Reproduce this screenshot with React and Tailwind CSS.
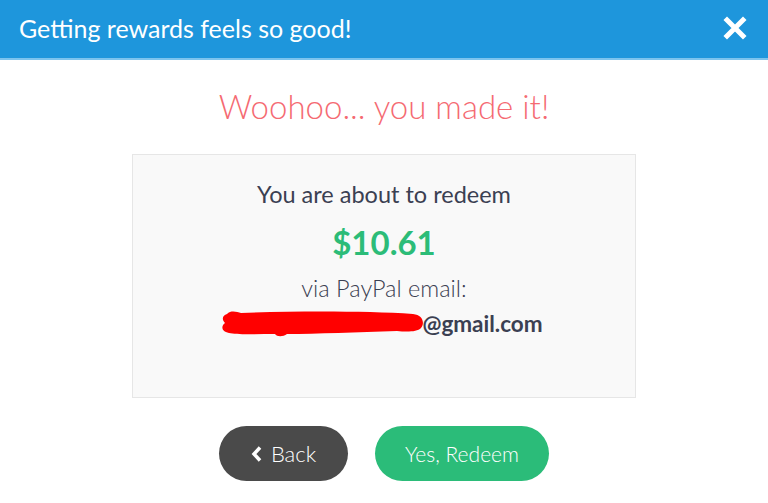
const App = () => {
    return (
        <div className="w-[768px] h-[503px] bg-white overflow-hidden" style={{ fontFamily: 'Lato, "Noto Sans", sans-serif' }}>
            <div className="h-[60px] bg-[#1e96dc] border-b-2 border-[#7cc4ee] flex items-center justify-between pl-[19px] pr-[21px]">
                <h1 className="text-white text-[25px] leading-none pb-[2px]">Getting rewards feels so good!</h1>
                <svg width="24" height="24" viewBox="0 0 24 24" className="mb-[2px]">
                    <path d="M4 4 L20 20 M20 4 L4 20" stroke="white" strokeWidth="5" strokeLinecap="square" />
                </svg>
            </div>

            <div className="flex flex-col items-center">
                <h2 className="mt-[30px] text-[33px] font-light text-[#f56a72] leading-none">Woohoo... you made it!</h2>

                <div className="mt-[31px] w-[504px] h-[244px] bg-[#f9f9f9] border border-[#e6e6e6] flex flex-col items-center text-[#3b4052]">
                    <p className="mt-[28px] text-[23.5px] leading-none">You are about to redeem</p>
                    <p className="mt-[19px] text-[33px] font-bold text-[#2cbc78] leading-none">$10.61</p>
                    <p className="mt-[18px] text-[23.5px] font-light leading-none">via PayPal email:</p>
                    <div className="relative mt-[13px] flex items-center">
                        <span className="w-[197px]" />
                        <span className="text-[22.5px] font-bold leading-none">@gmail.com</span>
                        <svg className="absolute left-[-8px] top-[-6px]" width="212" height="34" viewBox="0 0 212 34">
                            <path d="M10 7 C14 3 20 5 24 6 C80 4 150 4 196 7 C206 8 208 16 204 21 C200 25 190 25 180 24 C140 25 100 27 70 27 C66 30 60 30 58 27 C40 27 20 28 12 26 C4 24 4 19 8 16 C4 12 6 8 10 7 Z" fill="#ff0000" />
                        </svg>
                    </div>
                </div>

                <div className="mt-[28px] flex gap-[27px]">
                    <button className="w-[129px] h-[55px] rounded-full bg-[#4a4a4a] text-white text-[22px] font-light flex items-center justify-center gap-[9px]">
                        <svg width="11" height="16" viewBox="0 0 11 16">
                            <path d="M9 1.5 L3 8 L9 14.5" stroke="white" strokeWidth="3.5" fill="none" />
                        </svg>
                        Back
                    </button>
                    <button className="w-[174px] h-[55px] rounded-full bg-[#2bbc79] text-white text-[21px] font-light">
                        Yes, Redeem
                    </button>
                </div>
            </div>
        </div>
    );
};

export default App;
